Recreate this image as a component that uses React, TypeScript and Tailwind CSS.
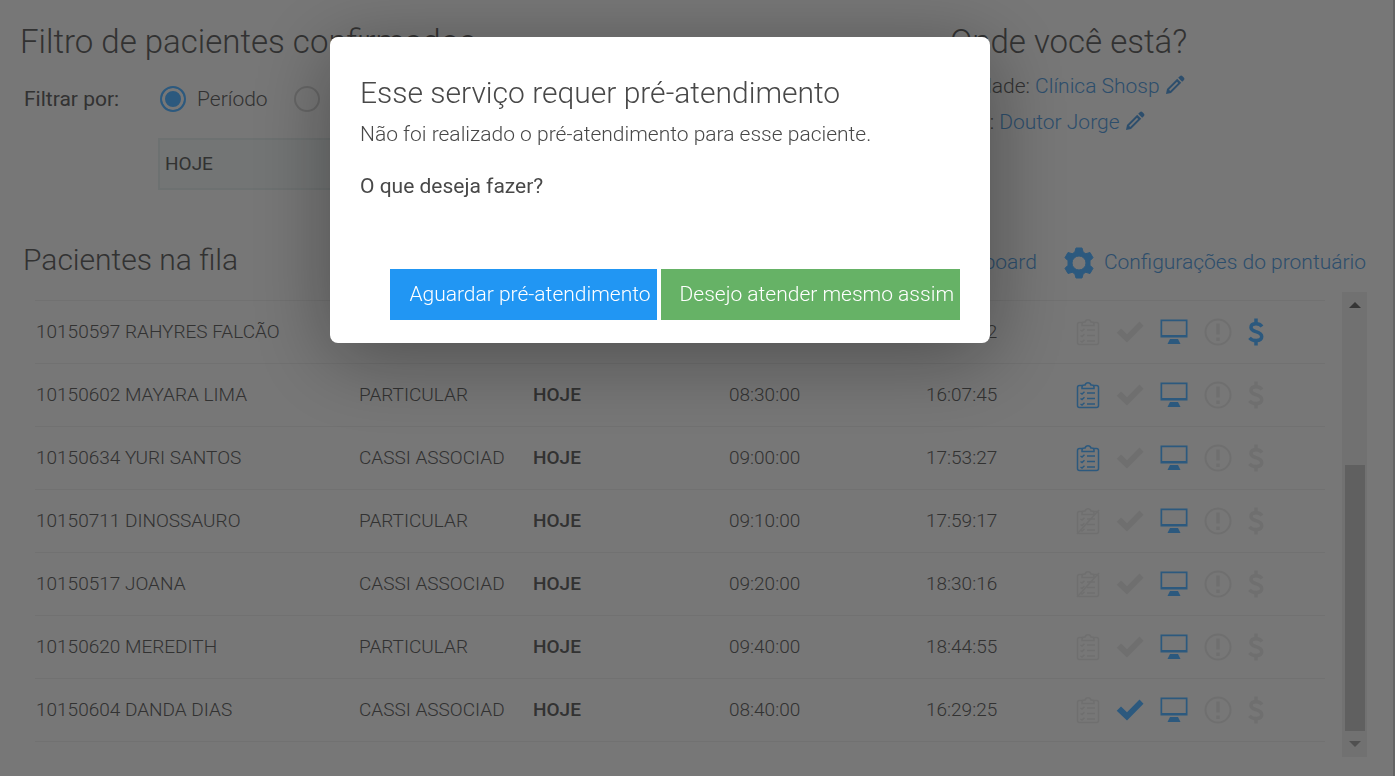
import { useState } from 'react';
import type { ReactNode } from 'react';

interface Patient {
  code: string;
  name: string;
  plan: string;
  arrival: string;
  confirmed: string;
  form?: 'active' | 'crossed';
  attended?: boolean;
  paid?: boolean;
}

const patients: Patient[] = [
  { code: '10150597', name: 'RAHYRES FALCÃO', plan: 'PARTICULAR', arrival: '08:20:00', confirmed: '16:05:22', paid: true },
  { code: '10150602', name: 'MAYARA LIMA', plan: 'PARTICULAR', arrival: '08:30:00', confirmed: '16:07:45', form: 'active' },
  { code: '10150634', name: 'YURI SANTOS', plan: 'CASSI ASSOCIAD', arrival: '09:00:00', confirmed: '17:53:27', form: 'active' },
  { code: '10150711', name: 'DINOSSAURO', plan: 'PARTICULAR', arrival: '09:10:00', confirmed: '17:59:17', form: 'crossed' },
  { code: '10150517', name: 'JOANA', plan: 'CASSI ASSOCIAD', arrival: '09:20:00', confirmed: '18:30:16', form: 'crossed' },
  { code: '10150620', name: 'MEREDITH', plan: 'PARTICULAR', arrival: '09:40:00', confirmed: '18:44:55' },
  { code: '10150604', name: 'DANDA DIAS', plan: 'CASSI ASSOCIAD', arrival: '08:40:00', confirmed: '16:29:25', attended: true },
];

function ClipboardIcon({ crossed }: { crossed?: boolean }) {
  return (
    <svg viewBox="0 0 24 28" className="w-6 h-7" fill="none" stroke="currentColor" strokeWidth="1.5">
      <path d="M7 4.5H3.5a2 2 0 0 0-2 2v18a2 2 0 0 0 2 2h17a2 2 0 0 0 2-2v-18a2 2 0 0 0-2-2H17" />
      <path d="M6 7.500V6q0-2 2.500-2h.6a3 3 0 0 1 5.800 0h.6Q18 4 18 6v1.500z" />
      <path d="m4.500 12 1.500 1 2.500-2.200M11 12h8M4.500 17.500l1.500 1 2.500-2.200M11 17.500h8M4.500 23l1.500 1 2.500-2.200M11 23h8" />
      {crossed && <path d="M1 27 23 3" strokeWidth="1.5" />}
    </svg>
  );
}

function CheckIcon() {
  return (
    <svg viewBox="0 0 28 28" className="w-7 h-7" fill="currentColor">
      <path d="M.7 14.800 5 10.500l6 5.800L23.500 3.500l4 4.200L11 24.500z" />
    </svg>
  );
}

function MonitorIcon() {
  return (
    <svg viewBox="0 0 28 28" className="w-7 h-7" fill="currentColor">
      <path d="M.5 1.500h27v18H.5zM2.200 3.200v13.800h23.600V3.200z" fillRule="evenodd" />
      <path d="M10 21h8l2.500 5h-13z" />
    </svg>
  );
}

function AlertIcon() {
  return (
    <svg viewBox="0 0 28 28" className="w-7 h-7" fill="none" stroke="currentColor">
      <circle cx="14" cy="14" r="12.500" strokeWidth="2" />
      <path d="M14 5.500v11M14 19.500v3.500" strokeWidth="3.5" />
    </svg>
  );
}

function DollarIcon() {
  return (
    <svg viewBox="0 0 16 28" className="w-4 h-7" fill="none" stroke="currentColor" strokeWidth="3.5">
      <path d="M14 8.500C12.500 6.500 10.500 5.800 8 5.800c-3 0-5 1.400-5 3.600C3 12 5.500 12.800 8 13.700c3 1 5.700 2 5.700 4.900 0 2.500-2.200 4-5.500 4-2.700 0-4.900-.8-6.700-2.800" />
      <path d="M8 .5v5M8 22.500v5" />
    </svg>
  );
}

function PencilIcon() {
  return (
    <svg viewBox="0 0 20 20" className="inline-block w-5 h-5 -mt-1" fill="currentColor">
      <path d="M14.800 1.200a2 2 0 0 1 2.700 0l1.300 1.300a2 2 0 0 1 0 2.700L17.200 6.800 13.200 2.800zM12.200 3.800l4 4L6 18l-5 1 1-5zM12 6.800l-8 8 1.200 1.200 8-8z" fillRule="evenodd" />
    </svg>
  );
}

function GearIcon() {
  return (
    <svg viewBox="0 0 30 32" className="w-[30px] h-8" fill="currentColor">
      <path
        fillRule="evenodd"
        strokeLinejoin="round"
        stroke="currentColor"
        strokeWidth="1"
        d="M12 1h6l1.200 4.200 2.600 1.500L26 5.500l3 5.200-3 3v4.600l3 3-3 5.200-4.200-1.200-2.600 1.500L18 31h-6l-1.200-4.200-2.600-1.500L4 26.500l-3-5.200 3-3v-4.600l-3-3 3-5.200 4.200 1.200 2.600-1.500zM15 9a7 7 0 1 0 0 14 7 7 0 0 0 0-14z"
      />
    </svg>
  );
}

function Action({ label, on, children }: { label: string; on?: boolean; children: ReactNode }) {
  return (
    <button type="button" aria-label={label} className={on ? 'text-[#58b2fc]' : 'text-[#dedede]'}>
      {children}
    </button>
  );
}

function PatientRow({ patient }: { patient: Patient }) {
  return (
    <tr className="h-[63px] border-t border-[#e2e2e2]">
      <td className="pl-px whitespace-nowrap">{patient.code} {patient.name}</td>
      <td className="pl-px">
        <div className="w-[150px] overflow-hidden whitespace-nowrap">{patient.plan}</div>
      </td>
      <td className="pl-px font-medium">HOJE</td>
      <td>{patient.arrival}</td>
      <td>{patient.confirmed}</td>
      <td>
        <div className="flex items-center gap-4">
          <Action label="Pré-atendimento" on={patient.form === 'active'}>
            <ClipboardIcon crossed={patient.form === 'crossed'} />
          </Action>
          <Action label="Atendido" on={patient.attended}><CheckIcon /></Action>
          <Action label="Chamar no painel" on><MonitorIcon /></Action>
          <Action label="Alertas"><AlertIcon /></Action>
          <Action label="Pagamento" on={patient.paid}><DollarIcon /></Action>
        </div>
      </td>
    </tr>
  );
}

function Scrollbar() {
  return (
    <div aria-hidden="true" className="w-[25px] h-[465px] shrink-0 flex flex-col items-center bg-[#e2e2e2] py-[10px]">
      <svg viewBox="0 0 12 6" className="w-3 h-[6px]"><path d="M0 6 6 0l6 6z" fill="#6c6c6c" /></svg>
      <div className="grow" />
      <div className="w-5 h-[266px] bg-[#c0c0c0]" />
      <svg viewBox="0 0 12 6" className="w-3 h-[6px] mt-[10px]"><path d="m0 0 6 6 6-6z" fill="#a0a0a0" /></svg>
    </div>
  );
}

function PreCareModal() {
  return (
    <div className="fixed inset-0 flex items-start justify-center bg-black/50 pt-[37px] pr-[75px]">
      <div
        role="dialog"
        aria-labelledby="modal-title"
        className="w-[660px] rounded-lg bg-white px-[30px] pt-[34px] pb-[23px] text-[#484848] shadow-[0_14px_80px_rgba(0,0,0,0.34)]"
      >
        <h2 id="modal-title" className="text-[30px] leading-[44px] font-light">Esse serviço requer pré-atendimento</h2>
        <p className="text-[21px] leading-[38px] font-light">Não foi realizado o pré-atendimento para esse paciente.</p>
        <p className="mt-[14px] text-[21px] leading-[38px] font-normal">O que deseja fazer?</p>
        <div className="mt-[64px] flex justify-end gap-1 text-[21px] leading-[51px] text-white">
          <button type="button" className="bg-[#2196f3] pl-[19px] pr-[6px]">Aguardar pré-atendimento</button>
          <button type="button" className="bg-[#66b266] pl-[19px] pr-[6px]">Desejo atender mesmo assim</button>
        </div>
      </div>
    </div>
  );
}

export default function App() {
  const [filter, setFilter] = useState('periodo');

  return (
    <div className="min-h-screen bg-[#eeeeee] border-r-2 border-[#c8c8c8] font-['Roboto',sans-serif] font-light text-[#646464]">
      <header className="flex pt-[20px]">
        <section className="w-[950px] shrink-0 pl-[20px]">
          <h1 className="text-[33px] leading-[44px]">Filtro de pacientes confirmados</h1>
          <div className="flex items-center mt-[14px] pl-[4px] text-[21px] leading-[42px]">
            <span className="w-[136px] font-normal">Filtrar por:</span>
            <label className="flex items-center w-[134px]">
              <input
                type="radio"
                name="filtro"
                checked={filter === 'periodo'}
                onChange={() => setFilter('periodo')}
                className="appearance-none w-[26px] h-[26px] mr-[11px] rounded-full border-2 border-[#58b2fc] checked:bg-[#58b2fc] checked:shadow-[inset_0_0_0_3px_#eeeeee]"
              />
              Período
            </label>
            <label className="flex items-center">
              <input
                type="radio"
                name="filtro"
                checked={filter === 'data'}
                onChange={() => setFilter('data')}
                className="appearance-none w-[26px] h-[26px] mr-[11px] rounded-full border-2 border-[#cccccc] checked:bg-[#58b2fc]"
              />
              Data
            </label>
          </div>
          <select
            aria-label="Período"
            className="appearance-none block w-[400px] h-[52px] mt-[18px] ml-[138px] pl-[5px] border-2 border-[#dbe2e2] bg-[#e6eaea] text-[19px] font-normal"
          >
            <option>HOJE</option>
          </select>
        </section>
        <section>
          <h1 className="text-[33px] leading-[44px]">Onde você está?</h1>
          <div className="mt-[4px] text-[21px] leading-[36px]">
            <p>Unidade: <a href="#unidade" className="text-[#5a9cd8]">Clínica Shosp <PencilIcon /></a></p>
            <p>Sala: <a href="#sala" className="text-[#5a9cd8]">Doutor Jorge <PencilIcon /></a></p>
          </div>
        </section>
      </header>

      <div className="flex items-center mt-[48px] pl-[23px] pr-[27px]">
        <h2 className="grow text-[30px] leading-[44px]">Pacientes na fila</h2>
        <nav className="flex items-center pt-[6px] text-[21px] text-[#5a9cd8]">
          <a href="#dashboard" className="mr-[27px]">Dashboard</a>
          <a href="#configuracoes" className="flex items-center gap-[10px]">
            <span className="text-[#58b2fc]"><GearIcon /></span>
            Configurações do prontuário
          </a>
        </nav>
      </div>

      <div className="flex items-start justify-between mt-[10px] pl-[35px] pr-[26px]">
        <table className="grow mt-2 mr-[17px] table-fixed border-b border-[#e2e2e2] text-left text-[19px]">
          <colgroup>
            <col className="w-[323px]" />
            <col className="w-[174px]" />
            <col className="w-[197px]" />
            <col className="w-[197px]" />
            <col className="w-[150px]" />
            <col />
          </colgroup>
          <tbody>
            {patients.map((patient) => (
              <PatientRow key={patient.code} patient={patient} />
            ))}
          </tbody>
        </table>
        <Scrollbar />
      </div>

      <PreCareModal />
    </div>
  );
}
